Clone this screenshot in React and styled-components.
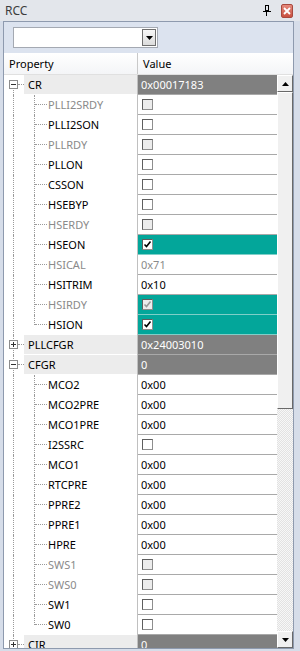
import styled, { createGlobalStyle } from 'styled-components';

const rows = [
  { group: true, name: 'CR', value: '0x00017183', open: true },
  { name: 'PLLI2SRDY', check: true, disabled: true },
  { name: 'PLLI2SON', check: true },
  { name: 'PLLRDY', check: true, disabled: true },
  { name: 'PLLON', check: true },
  { name: 'CSSON', check: true },
  { name: 'HSEBYP', check: true },
  { name: 'HSERDY', check: true, disabled: true },
  { name: 'HSEON', check: true, checked: true, hot: true },
  { name: 'HSICAL', value: '0x71', disabled: true },
  { name: 'HSITRIM', value: '0x10' },
  { name: 'HSIRDY', check: true, checked: true, disabled: true, hot: true },
  { name: 'HSION', check: true, checked: true, hot: true, last: true },
  { group: true, name: 'PLLCFGR', value: '0x24003010' },
  { group: true, name: 'CFGR', value: '0', open: true },
  { name: 'MCO2', value: '0x00' },
  { name: 'MCO2PRE', value: '0x00' },
  { name: 'MCO1PRE', value: '0x00' },
  { name: 'I2SSRC', check: true },
  { name: 'MCO1', value: '0x00' },
  { name: 'RTCPRE', value: '0x00' },
  { name: 'PPRE2', value: '0x00' },
  { name: 'PPRE1', value: '0x00' },
  { name: 'HPRE', value: '0x00' },
  { name: 'SWS1', check: true, disabled: true },
  { name: 'SWS0', check: true, disabled: true },
  { name: 'SW1', check: true },
  { name: 'SW0', check: true, last: true },
  { group: true, name: 'CIR', value: '0' },
];

export default function App() {
  return (
    <>
      <GlobalStyle />
      <Window>
        <TitleBar>
          <Title>RCC</Title>
          <TitleIcons>
            <svg width="8" height="11" viewBox="0 0 8 11">
              <rect x="2.5" y="0.5" width="3" height="5" fill="none" stroke="#000" />
              <rect x="5" y="0" width="1" height="6" fill="#000" />
              <rect x="0" y="6" width="8" height="1" fill="#000" />
              <rect x="3" y="7" width="1" height="4" fill="#000" />
            </svg>
            <CloseButton>
              <svg width="8" height="8" viewBox="0 0 8 8">
                <path d="M1 1 L7 7 M7 1 L1 7" stroke="#fff" strokeWidth="1.8" />
              </svg>
            </CloseButton>
          </TitleIcons>
        </TitleBar>
        <Panel>
          <Toolbar>
            <Combo>
              <ComboButton>
                <svg width="7" height="4" viewBox="0 0 7 4">
                  <path d="M0 0 H7 L3.5 4 Z" fill="#000" />
                </svg>
              </ComboButton>
            </Combo>
          </Toolbar>
          <Header>
            <HeaderCell $divider>Property</HeaderCell>
            <HeaderCell>Value</HeaderCell>
          </Header>
          <ListArea>
            <List>
              {rows.map((r, i) => (
                <Row key={i}>
                  <PropCell>
                    <RootGutter $first={i === 0} $group={r.group}>
                      {r.group && (
                        <Expander>
                          <svg width="9" height="9" viewBox="0 0 9 9">
                            <rect x="0.5" y="0.5" width="8" height="8" fill="#fff" stroke="#8c8c8c" />
                            <rect x="2" y="4" width="5" height="1" fill="#333" />
                            {!r.open && <rect x="4" y="2" width="1" height="5" fill="#333" />}
                          </svg>
                        </Expander>
                      )}
                    </RootGutter>
                    {r.group ? (
                      <GroupLabel>{r.name}</GroupLabel>
                    ) : (
                      <>
                        <ChildGutter $last={r.last} />
                        <Label $disabled={r.disabled}>{r.name}</Label>
                      </>
                    )}
                  </PropCell>
                  <ValueCell $group={r.group} $hot={r.hot} $disabled={r.disabled}>
                    {r.check ? (
                      <CheckBox $disabled={r.disabled}>
                        {r.checked && (
                          <svg width="9" height="9" viewBox="0 0 9 9">
                            <path
                              d="M1.5 4.5 L3.5 6.5 L7.5 1.5"
                              fill="none"
                              stroke={r.disabled ? '#9a9a9a' : '#000'}
                              strokeWidth="1.6"
                            />
                          </svg>
                        )}
                      </CheckBox>
                    ) : (
                      r.value
                    )}
                  </ValueCell>
                </Row>
              ))}
            </List>
            <ScrollBar>
              <ArrowButton>
                <svg width="7" height="4" viewBox="0 0 7 4">
                  <path d="M0 4 H7 L3.5 0 Z" fill="#000" />
                </svg>
              </ArrowButton>
              <Track>
                <Thumb />
              </Track>
              <ArrowButton>
                <svg width="7" height="4" viewBox="0 0 7 4">
                  <path d="M0 0 H7 L3.5 4 Z" fill="#000" />
                </svg>
              </ArrowButton>
            </ScrollBar>
          </ListArea>
        </Panel>
      </Window>
    </>
  );
}

const GlobalStyle = createGlobalStyle`
  body {
    margin: 0;
    font-family: "Noto Sans", "Open Sans", sans-serif;
    font-size: 11px;
  }
`;

const Window = styled.div`
  width: 300px;
  height: 651px;
  background: #d6dde9;
  display: flex;
  flex-direction: column;
  overflow: hidden;
`;

const TitleBar = styled.div`
  height: 21px;
  flex: none;
  display: flex;
  align-items: center;
  justify-content: space-between;
  padding: 0 7px 0 5px;
  background: #e3e6eb;
`;

const Title = styled.span`
  font-size: 12px;
  color: #3c3c3c;
`;

const TitleIcons = styled.div`
  display: flex;
  align-items: center;
  gap: 10px;
`;

const CloseButton = styled.div`
  width: 12px;
  height: 14px;
  box-sizing: border-box;
  border: 1px solid #a8493e;
  border-radius: 2px;
  background: linear-gradient(#e58a7d, #c8503f);
  display: flex;
  align-items: center;
  justify-content: center;
`;

const Panel = styled.div`
  height: 626px;
  flex: none;
  margin: 0 6px 0 3px;
  border: 1px solid #8e9aae;
  display: flex;
  flex-direction: column;
  background: #fff;
`;

const Toolbar = styled.div`
  height: 31px;
  flex: none;
  box-sizing: border-box;
  padding: 5px 0 0 9px;
  background: #dce3ef;
`;

const Combo = styled.div`
  width: 145px;
  height: 21px;
  box-sizing: border-box;
  border: 1px solid #a4a9b2;
  background: #fff;
  display: flex;
  justify-content: flex-end;
  align-items: center;
  padding-right: 1px;
`;

const ComboButton = styled.div`
  width: 14px;
  height: 17px;
  box-sizing: border-box;
  border: 1px solid #6f6f6f;
  background: linear-gradient(#f7f7f7, #dcdcdc);
  display: flex;
  align-items: center;
  justify-content: center;
`;

const Header = styled.div`
  height: 22px;
  flex: none;
  box-sizing: border-box;
  display: grid;
  grid-template-columns: 134px 1fr;
  background: linear-gradient(#ffffff, #f4f5f7);
  border-bottom: 1px solid #e0e0e0;
`;

const HeaderCell = styled.div`
  display: flex;
  align-items: center;
  padding-left: 5px;
  color: #000;
  border-right: ${p => (p.$divider ? '1px solid #c9c9c9' : 'none')};
`;

const ListArea = styled.div`
  flex: 1;
  display: flex;
  min-height: 0;
`;

const List = styled.div`
  width: 273px;
  flex: none;
  overflow: hidden;
`;

const Row = styled.div`
  height: 20px;
  display: grid;
  grid-template-columns: 134px 139px;
`;

const PropCell = styled.div`
  display: flex;
  border-right: 1px solid #c0c0c0;
  background: #fff;
`;

const RootGutter = styled.div`
  width: 20px;
  flex: none;
  position: relative;

  &::before {
    content: '';
    position: absolute;
    left: 9px;
    top: ${p => (p.$first ? '10px' : '0')};
    bottom: 0;
    border-left: 1px dotted #9a9a9a;
  }

  &::after {
    content: '';
    display: ${p => (p.$group ? 'block' : 'none')};
    position: absolute;
    left: 14px;
    width: 6px;
    top: 9px;
    border-top: 1px dotted #9a9a9a;
  }
`;

const Expander = styled.div`
  position: absolute;
  left: 5px;
  top: 5px;
  width: 9px;
  height: 9px;
  z-index: 1;
  display: flex;
`;

const ChildGutter = styled.div`
  width: 24px;
  flex: none;
  position: relative;

  &::before {
    content: '';
    position: absolute;
    left: 10px;
    top: 0;
    height: ${p => (p.$last ? '10px' : '20px')};
    border-left: 1px dotted #9a9a9a;
  }

  &::after {
    content: '';
    position: absolute;
    left: 11px;
    width: 12px;
    top: 9px;
    border-top: 1px dotted #9a9a9a;
  }
`;

const Label = styled.div`
  display: flex;
  align-items: center;
  height: 19px;
  color: ${p => (p.$disabled ? '#8a8a8a' : '#000')};
  white-space: nowrap;
`;

const GroupLabel = styled.div`
  flex: 1;
  display: flex;
  align-items: center;
  height: 19px;
  padding-left: 4px;
  background: #ececec;
  color: #000;
`;

const ValueCell = styled.div`
  height: 19px;
  display: flex;
  align-items: center;
  padding-left: 3px;
  border-bottom: 1px solid ${p => (p.$hot ? '#7fcfc8' : '#a9a9a9')};
  background: ${p => (p.$group ? '#808080' : p.$hot ? '#03a69a' : '#fff')};
  color: ${p => (p.$group ? '#fff' : p.$disabled ? '#8a8a8a' : '#000')};
  white-space: nowrap;
`;

const CheckBox = styled.div`
  width: 11px;
  height: 11px;
  box-sizing: border-box;
  margin-left: 1px;
  border: 1px solid #8e8e8e;
  border-top-color: #5e5e5e;
  border-left-color: #5e5e5e;
  background: ${p => (p.$disabled ? '#ececec' : '#fff')};
  display: flex;
  align-items: center;
  justify-content: center;
`;

const ScrollBar = styled.div`
  width: 16px;
  flex: none;
  display: flex;
  flex-direction: column;
  background: repeating-conic-gradient(#e2e2e2 0 25%, #f7f7f7 0 50%) 0 0 / 2px 2px;
`;

const ArrowButton = styled.div`
  height: 17px;
  flex: none;
  box-sizing: border-box;
  background: #f0f0f0;
  border: 1px solid;
  border-color: #ffffff #696969 #696969 #ffffff;
  display: flex;
  align-items: center;
  justify-content: center;
`;

const Track = styled.div`
  flex: 1;
  display: flex;
  flex-direction: column;
`;

const Thumb = styled.div`
  height: 317px;
  box-sizing: border-box;
  background: #f0f0f0;
  border: 1px solid;
  border-color: #ffffff #696969 #696969 #ffffff;
`;
